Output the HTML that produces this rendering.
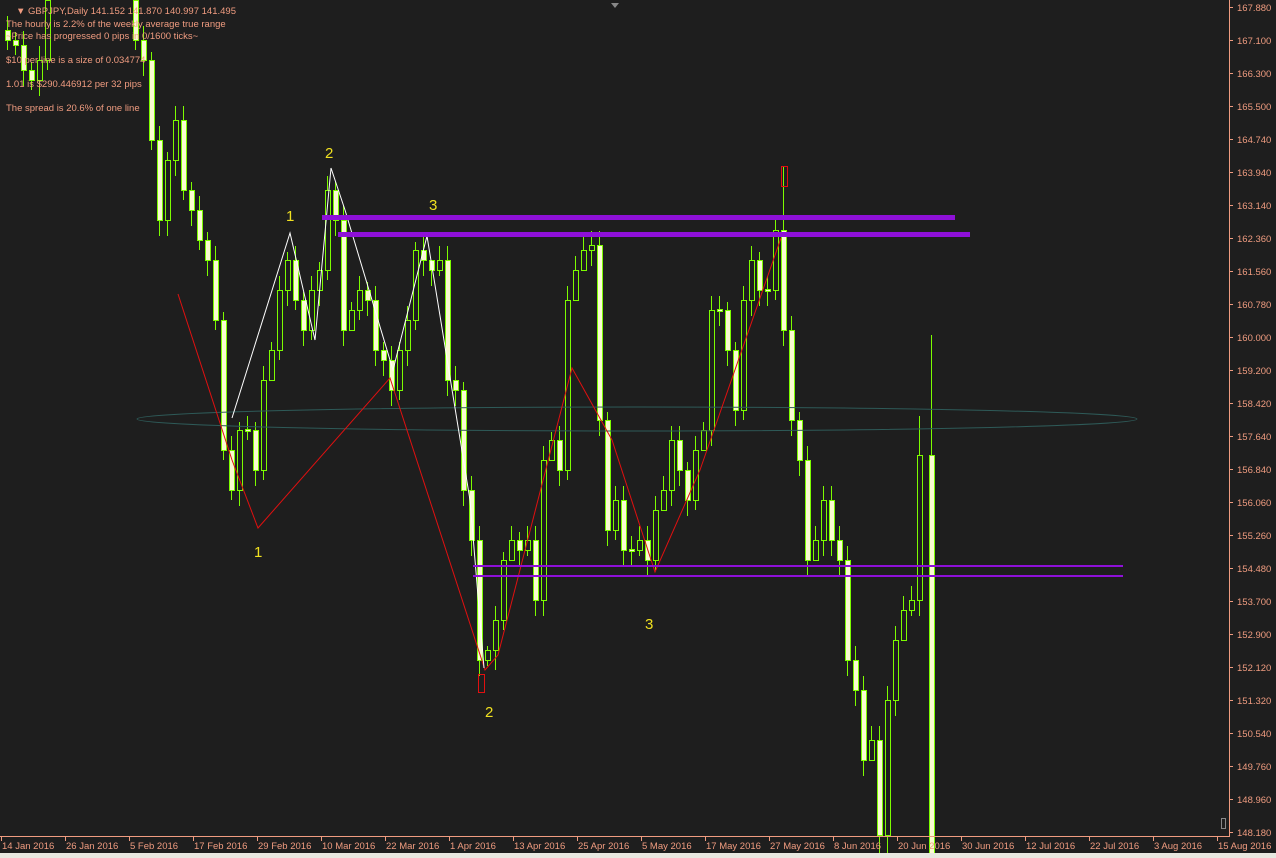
<!DOCTYPE html>
<html><head><meta charset="utf-8"><style>
html,body{margin:0;padding:0;background:#1e1e1e;width:1276px;height:858px;overflow:hidden}
svg{display:block}
text{font-family:"Liberation Sans",sans-serif}
</style></head><body>
<svg width="1276" height="858" xmlns="http://www.w3.org/2000/svg">
<rect width="1276" height="858" fill="#1e1e1e"/>
<path fill="none" stroke="#7cfc00" stroke-width="1" d="M7.5 16V50M15.5 32V55M23.5 31V86M31.5 62V90M39.5 46V96M47.5 0V70M135.5 0V50M143.5 26V76M151.5 52V150M159.5 126V236M167.5 152V236M175.5 106V176M183.5 106V200M191.5 182V226M199.5 196V250M207.5 232V276M215.5 246V330M223.5 312V460M231.5 436V500M239.5 422V506M247.5 416V440M255.5 422V486M263.5 366V480M271.5 342V366M279.5 276V360M287.5 252V306M295.5 246V310M303.5 292V346M311.5 276V340M319.5 262V306M327.5 176V280M335.5 182V236M343.5 206V346M351.5 302V326M359.5 276V320M367.5 282V316M375.5 286V366M383.5 342V376M391.5 346V406M399.5 342V400M407.5 306V366M415.5 242V330M423.5 236V276M431.5 262V286M439.5 246V276M447.5 246V396M455.5 366V406M463.5 382V506M471.5 476V556M479.5 526V676M487.5 646V666M495.5 606V670M503.5 552V630M511.5 526V556M519.5 532V566M527.5 526V556M535.5 526V616M543.5 446V616M551.5 432V456M559.5 426V486M567.5 286V480M575.5 256V286M583.5 236V266M591.5 231V266M599.5 231V436M607.5 412V546M615.5 486V540M623.5 486V566M631.5 536V566M639.5 526V556M647.5 526V576M655.5 496V570M663.5 476V506M671.5 426V506M679.5 426V486M687.5 462V516M695.5 436V510M703.5 422V446M711.5 296V446M719.5 296V326M727.5 302V366M735.5 342V426M743.5 286V420M751.5 246V316M759.5 252V306M767.5 276V306M775.5 216V300M783.5 166V346M791.5 316V436M799.5 412V476M807.5 446V576M815.5 526V556M823.5 486V556M831.5 486V556M839.5 526V576M847.5 546V676M855.5 646V706M863.5 676V776M871.5 726V756M879.5 726V858M887.5 686V858M895.5 626V716M903.5 596V626M911.5 586V616M919.5 416V616M931.5 335V858"/>
<path fill="#fafad2" stroke="#7cfc00" stroke-width="1" d="M5.5 30.5h5v10h-5zM13.5 40.5h5v5h-5zM21.5 45.5h5v25h-5zM29.5 70.5h5v10h-5zM133.5 0.5h5v40h-5zM141.5 40.5h5v20h-5zM149.5 60.5h5v80h-5zM157.5 140.5h5v80h-5zM181.5 120.5h5v70h-5zM189.5 190.5h5v20h-5zM197.5 210.5h5v30h-5zM205.5 240.5h5v20h-5zM213.5 260.5h5v60h-5zM221.5 320.5h5v130h-5zM229.5 450.5h5v40h-5zM245.5 429.5h5v2h-5zM253.5 430.5h5v40h-5zM293.5 260.5h5v40h-5zM301.5 300.5h5v30h-5zM333.5 190.5h5v30h-5zM341.5 220.5h5v110h-5zM365.5 290.5h5v10h-5zM373.5 300.5h5v50h-5zM381.5 350.5h5v10h-5zM389.5 360.5h5v30h-5zM421.5 250.5h5v10h-5zM429.5 260.5h5v10h-5zM445.5 260.5h5v120h-5zM453.5 380.5h5v10h-5zM461.5 390.5h5v100h-5zM469.5 490.5h5v50h-5zM477.5 540.5h5v120h-5zM517.5 540.5h5v10h-5zM533.5 540.5h5v60h-5zM557.5 440.5h5v30h-5zM597.5 245.5h5v175h-5zM605.5 420.5h5v110h-5zM621.5 500.5h5v50h-5zM629.5 549.5h5v2h-5zM645.5 540.5h5v20h-5zM677.5 440.5h5v30h-5zM685.5 470.5h5v30h-5zM717.5 309.5h5v2h-5zM725.5 310.5h5v40h-5zM733.5 350.5h5v60h-5zM757.5 260.5h5v30h-5zM765.5 289.5h5v2h-5zM781.5 230.5h5v100h-5zM789.5 330.5h5v90h-5zM797.5 420.5h5v40h-5zM805.5 460.5h5v100h-5zM829.5 500.5h5v40h-5zM837.5 540.5h5v20h-5zM845.5 560.5h5v100h-5zM853.5 660.5h5v30h-5zM861.5 690.5h5v70h-5zM877.5 740.5h5v95h-5zM929.5 455.5h5v403h-5z"/>
<path fill="#1e1e1e" stroke="#7cfc00" stroke-width="1" d="M37.5 60.5h5v20h-5zM45.5 0.5h5v60h-5zM165.5 160.5h5v60h-5zM173.5 120.5h5v40h-5zM237.5 430.5h5v60h-5zM261.5 380.5h5v90h-5zM269.5 350.5h5v30h-5zM277.5 290.5h5v60h-5zM285.5 260.5h5v30h-5zM309.5 290.5h5v40h-5zM317.5 270.5h5v20h-5zM325.5 190.5h5v80h-5zM349.5 310.5h5v20h-5zM357.5 290.5h5v20h-5zM397.5 350.5h5v40h-5zM405.5 320.5h5v30h-5zM413.5 250.5h5v70h-5zM437.5 260.5h5v10h-5zM485.5 650.5h5v10h-5zM493.5 620.5h5v30h-5zM501.5 560.5h5v60h-5zM509.5 540.5h5v20h-5zM525.5 540.5h5v10h-5zM541.5 460.5h5v140h-5zM549.5 440.5h5v20h-5zM565.5 300.5h5v170h-5zM573.5 270.5h5v30h-5zM581.5 250.5h5v20h-5zM589.5 245.5h5v5h-5zM613.5 500.5h5v30h-5zM637.5 540.5h5v10h-5zM653.5 510.5h5v50h-5zM661.5 490.5h5v20h-5zM669.5 440.5h5v50h-5zM693.5 450.5h5v50h-5zM701.5 430.5h5v20h-5zM709.5 310.5h5v120h-5zM741.5 300.5h5v110h-5zM749.5 260.5h5v40h-5zM773.5 230.5h5v60h-5zM813.5 540.5h5v20h-5zM821.5 500.5h5v40h-5zM869.5 740.5h5v20h-5zM885.5 700.5h5v135h-5zM893.5 640.5h5v60h-5zM901.5 610.5h5v30h-5zM909.5 600.5h5v10h-5zM917.5 455.5h5v145h-5z"/>
<ellipse cx="637" cy="419" rx="500" ry="12" fill="none" stroke="#2e5a58" stroke-width="1"/>
<polyline points="178,294 232,460 258,528 390,378 485,670 498,655 572,368 612,440 655,572 700,470 781,238" fill="none" stroke="#e01010" stroke-width="1"/>
<polyline points="232,418 290,233 315,340 331,168 345,210 393,370 427,236 470,500 484,668" fill="none" stroke="#ffffff" stroke-width="1"/>
<rect x="322" y="215" width="633" height="5" fill="#8e10d8"/>
<rect x="338" y="232" width="632" height="5" fill="#8e10d8"/>
<rect x="473" y="565" width="650" height="2" fill="#8e10d8"/>
<rect x="473" y="575" width="650" height="2" fill="#8e10d8"/>
<rect x="781.5" y="166.5" width="6" height="20" fill="none" stroke="#e01010"/>
<rect x="478.5" y="674.5" width="6" height="18" fill="none" stroke="#e01010"/>
<g fill="#f0e020" font-size="15">
<text x="286" y="221">1</text><text x="325" y="158">2</text><text x="429" y="210">3</text>
<text x="254" y="557">1</text><text x="485" y="717">2</text><text x="645" y="629">3</text>
</g>
<g fill="#f09c80" font-size="9.5">
<text x="16" y="14">▼ GBPJPY,Daily  141.152 141.870 140.997 141.495</text>
<text x="6" y="27">The hourly is 2.2% of the weekly average true range</text>
<text x="6" y="39">~Price has progressed  0  pips in 0/1600 ticks~</text>
<text x="6" y="63">$10 per line is a size of 0.034774</text>
<text x="6" y="87">1.01 is $290.446912 per 32 pips</text>
<text x="6" y="111">The spread is 20.6% of one line</text>
</g>
<path d="M611 3 L619 3 L615 8 Z" fill="#888"/>
<rect x="1221.5" y="818.5" width="4" height="10" fill="none" stroke="#888"/>
<line x1="1229.5" y1="0" x2="1229.5" y2="837" stroke="#f09c80"/>
<line x1="0" y1="836.5" x2="1230" y2="836.5" stroke="#f09c80"/>
<path stroke="#f09c80" d="M1229 7.5h4M1229 40.5h4M1229 73.5h4M1229 106.5h4M1229 139.5h4M1229 172.5h4M1229 205.5h4M1229 238.5h4M1229 271.5h4M1229 304.5h4M1229 337.5h4M1229 370.5h4M1229 403.5h4M1229 436.5h4M1229 469.5h4M1229 502.5h4M1229 535.5h4M1229 568.5h4M1229 601.5h4M1229 634.5h4M1229 667.5h4M1229 700.5h4M1229 733.5h4M1229 766.5h4M1229 799.5h4M1229 832.5h4M1.5 836v5M65.5 836v5M129.5 836v5M193.5 836v5M257.5 836v5M321.5 836v5M385.5 836v5M449.5 836v5M513.5 836v5M577.5 836v5M641.5 836v5M705.5 836v5M769.5 836v5M833.5 836v5M897.5 836v5M961.5 836v5M1025.5 836v5M1089.5 836v5M1153.5 836v5M1217.5 836v5"/>
<g fill="#f09c80" font-size="9.5">
<text x="1237" y="11">167.880</text><text x="1237" y="44">167.100</text><text x="1237" y="77">166.300</text><text x="1237" y="110">165.500</text><text x="1237" y="143">164.740</text><text x="1237" y="176">163.940</text><text x="1237" y="209">163.140</text><text x="1237" y="242">162.360</text><text x="1237" y="275">161.560</text><text x="1237" y="308">160.780</text><text x="1237" y="341">160.000</text><text x="1237" y="374">159.200</text><text x="1237" y="407">158.420</text><text x="1237" y="440">157.640</text><text x="1237" y="473">156.840</text><text x="1237" y="506">156.060</text><text x="1237" y="539">155.260</text><text x="1237" y="572">154.480</text><text x="1237" y="605">153.700</text><text x="1237" y="638">152.900</text><text x="1237" y="671">152.120</text><text x="1237" y="704">151.320</text><text x="1237" y="737">150.540</text><text x="1237" y="770">149.760</text><text x="1237" y="803">148.960</text><text x="1237" y="836">148.180</text>
<text x="2" y="849">14 Jan 2016</text><text x="66" y="849">26 Jan 2016</text><text x="130" y="849">5 Feb 2016</text><text x="194" y="849">17 Feb 2016</text><text x="258" y="849">29 Feb 2016</text><text x="322" y="849">10 Mar 2016</text><text x="386" y="849">22 Mar 2016</text><text x="450" y="849">1 Apr 2016</text><text x="514" y="849">13 Apr 2016</text><text x="578" y="849">25 Apr 2016</text><text x="642" y="849">5 May 2016</text><text x="706" y="849">17 May 2016</text><text x="770" y="849">27 May 2016</text><text x="834" y="849">8 Jun 2016</text><text x="898" y="849">20 Jun 2016</text><text x="962" y="849">30 Jun 2016</text><text x="1026" y="849">12 Jul 2016</text><text x="1090" y="849">22 Jul 2016</text><text x="1154" y="849">3 Aug 2016</text><text x="1218" y="849">15 Aug 2016</text>
</g>
<rect x="0" y="853" width="1276" height="5" fill="#e8e8e0"/>
</svg>
</body></html>
